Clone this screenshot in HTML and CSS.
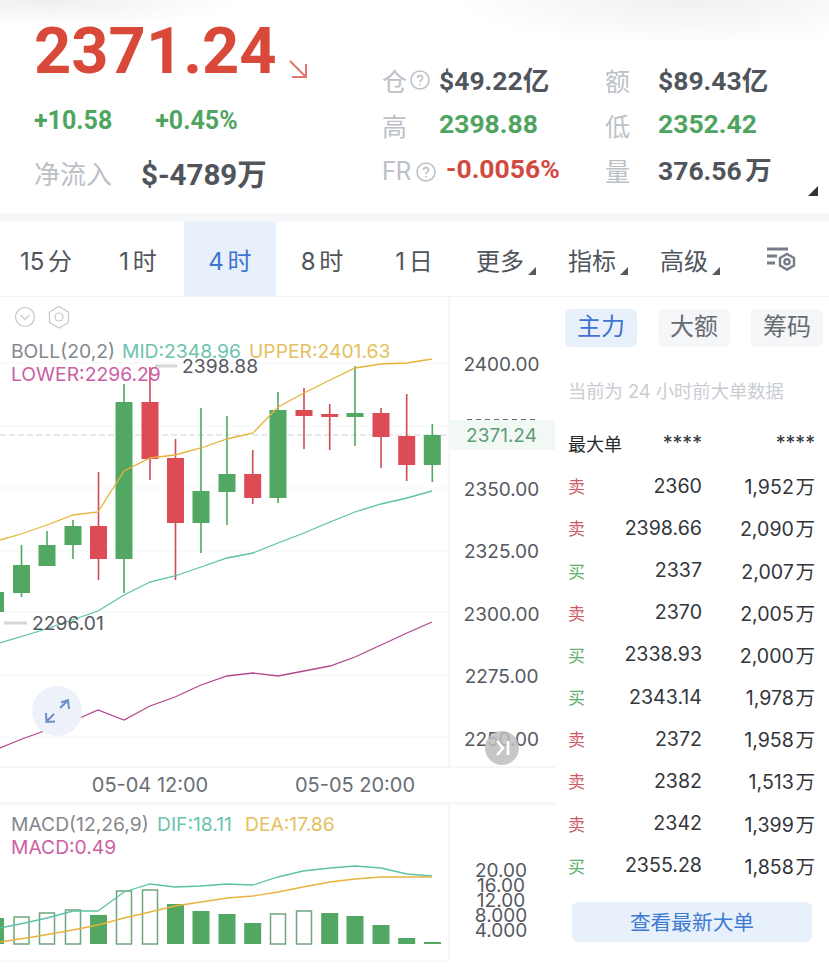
FILE: index.html
```html
<!DOCTYPE html>
<html lang="zh-CN">
  <head>
    <meta charset="UTF-8" />
    <meta name="viewport" content="width=device-width, initial-scale=1.0" />
    <title>2371.24 行情</title>
    <link rel="stylesheet" href="styles.css">
  </head>
  <body>
    <header class="ticker">
      <div class="ticker-main">
        <div class="price-row">
          <span class="price">2371.24</span>
          <svg class="price-arrow" width="22" height="22" viewBox="0 0 22 22">
            <path d="M3 3 L19 19 M5 19 H19 V6" />
          </svg>
        </div>
        <div class="change-row">
          <span>+10.58</span>
          <span>+0.45%</span>
        </div>
        <div class="flow-row">
          <span class="flow-label">净流入</span>
          <span class="flow-value">$-4789万</span>
        </div>
      </div>
      <div class="stats">
        <div class="stat-label">仓<svg class="help" width="20" height="20" viewBox="0 0 20 20"><circle cx="10" cy="10" r="9" /><path d="M7.4 8 C7.4 4.8 12.6 4.8 12.6 8 C12.6 10 10 10 10 12.2 M10 14 V15.4" /></svg></div>
        <div class="stat-value">$49.22亿</div>
        <div class="stat-label">额</div>
        <div class="stat-value">$89.43亿</div>
        <div class="stat-label">高</div>
        <div class="stat-value green">2398.88</div>
        <div class="stat-label">低</div>
        <div class="stat-value green">2352.42</div>
        <div class="stat-label latin">FR<svg class="help" width="20" height="20" viewBox="0 0 20 20"><circle cx="10" cy="10" r="9" /><path d="M7.4 8 C7.4 4.8 12.6 4.8 12.6 8 C12.6 10 10 10 10 12.2 M10 14 V15.4" /></svg></div>
        <div class="stat-value red">-0.0056%</div>
        <div class="stat-label">量</div>
        <div class="stat-value">376.56 万</div>
      </div>
      <span class="corner corner-dark"></span>
    </header>

    <nav class="tabs">
      <a class="tab">15 分</a>
      <a class="tab">1 时</a>
      <a class="tab active">4 时</a>
      <a class="tab">8 时</a>
      <a class="tab">1 日</a>
      <a class="tab menu">更多<span class="corner"></span></a>
      <a class="tab menu">指标<span class="corner"></span></a>
      <a class="tab menu">高级<span class="corner"></span></a>
      <a class="tab tab-icon">
        <svg width="32" height="26" viewBox="0 0 32 26">
          <path class="bars" d="M1 3 H22 M1 10 H11 M1 17 H9" />
          <path class="nut" d="M21 8 L28 12 V19.5 L21 23.5 L14 19.5 V12 Z" />
          <circle class="nut" cx="21" cy="15.8" r="2.6" />
        </svg>
      </a>
    </nav>

    <main class="content">
      <section class="charts">
        <svg class="chart" width="555" height="670" viewBox="0 297 555 670">
          <!-- grid -->
          <path class="grid" d="M0 363 H449 M0 426 H449 M0 488 H449 M0 551 H449 M0 612 H449 M0 675 H449 M0 737 H449 M0 961 H449" />
          <path class="axis" d="M449 297 V767 M449 804 V961 M0 767 H555" />
          <rect class="axis-band" x="0" y="802" width="555" height="3" />
          <path class="price-line" d="M0 435 H449" />

          <!-- pane icons -->
          <circle class="pane-icon" cx="25" cy="317" r="9.5" />
          <path class="pane-icon" d="M20.5 315 L25 319.5 L29.5 315" />
          <path class="pane-icon" d="M59 306.5 L68.5 312 V322.5 L59 328 L49.5 322.5 V312 Z" />
          <circle class="pane-icon" cx="59" cy="317" r="4" />

          <!-- candles -->
          <g class="candle-up">
            <path d="M21.5 545 V597 M47 531 V566 M73 520 V559 M124 384 V593 M201 408 V553 M227 416 V525 M278 392 V503 M355 366 V446 M432.3 424 V482" />
            <rect x="-13" y="592" width="17" height="20" />
            <rect x="13" y="565" width="17" height="28" />
            <rect x="38.5" y="545" width="17" height="21" />
            <rect x="64.5" y="526" width="17" height="19" />
            <rect x="115.5" y="402" width="17" height="157" />
            <rect x="192.5" y="491" width="17" height="32" />
            <rect x="218.5" y="474" width="17" height="18" />
            <rect x="269.5" y="410" width="17" height="88" />
            <rect x="346.5" y="413" width="17" height="4" />
            <rect x="423.8" y="435" width="17" height="30" />
          </g>
          <g class="candle-down">
            <path d="M98.5 472 V580 M150 367 V480 M175.5 439 V580 M252.7 450 V504 M304 388 V449 M329.7 404 V450 M381 408 V468 M406.7 394 V481" />
            <rect x="90" y="526" width="17" height="33" />
            <rect x="141.5" y="402" width="17" height="57" />
            <rect x="167" y="458" width="17" height="65" />
            <rect x="244.2" y="474" width="17" height="24" />
            <rect x="295.5" y="410" width="17" height="6" />
            <rect x="321.2" y="414" width="17" height="3" />
            <rect x="372.5" y="413" width="17" height="24" />
            <rect x="398.2" y="436" width="17" height="29" />
          </g>

          <!-- boll lines -->
          <polyline class="line-upper" points="0,540 21,534 47,525 73,515 98,512 124,471 150,458 175,455 201,448 227,439 253,433 278,407 304,393 330,380 355,368 381,364 407,363 432,359" />
          <polyline class="line-mid" points="0,643 43,630 98,611 124,595 150,582 175,576 201,567 227,558 253,553 278,543 304,533 330,522 355,512 381,504 407,498 432,491" />
          <polyline class="line-lower" points="0,748 22,739 47,730 73,721 98,710 124,720 150,706 175,697 201,685 227,676 253,673 278,676 304,671 330,666 355,657 381,645 407,633 432,622" />

          <!-- high and low marks -->
          <path class="mark" d="M155 366 H177 M4 623 H27" />
          <text class="t-mark" x="182" y="373">2398.88</text>
          <text class="t-mark" x="32" y="630">2296.01</text>

          <!-- legend -->
          <text class="t-legend" y="358"><tspan class="c-gray" x="11">BOLL(20,2)</tspan> <tspan class="c-teal" x="122">MID:2348.96</tspan> <tspan class="c-gold" x="249">UPPER:2401.63</tspan></text>
          <text class="t-legend c-pink" x="11" y="381">LOWER:2296.29</text>

          <!-- price axis -->
          <rect class="last-band" x="450" y="420" width="106" height="30" />
          <path class="last-dash" d="M467 419.5 H538" />
          <text class="t-axis" x="501.5" y="371">2400.00</text>
          <text class="t-axis c-last" x="501.5" y="442">2371.24</text>
          <text class="t-axis" x="501.5" y="496">2350.00</text>
          <text class="t-axis" x="501.5" y="558">2325.00</text>
          <text class="t-axis" x="501.5" y="621">2300.00</text>
          <text class="t-axis" x="501.5" y="683">2275.00</text>
          <text class="t-axis" x="501.5" y="746">2250.00</text>

          <!-- expand button -->
          <circle class="expand-bg" cx="57" cy="711" r="25" />
          <path class="expand" d="M61 702.5 L68 700 L69 709 M68 700.5 L60 708 M46 713 L46.5 722 L55 721.5 M46.5 721.5 L54 714" />

          <!-- jump to latest -->
          <circle class="jump-bg" cx="502" cy="748" r="17" />
          <path class="jump" d="M497 741 L503 748 L497 755 M508 741 V755" />

          <!-- time axis -->
          <text class="t-time" x="150" y="792">05-04 12:00</text>
          <text class="t-time" x="355" y="792">05-05 20:00</text>

          <!-- macd bars -->
          <g class="bar-solid">
            <rect x="-13" y="918" width="17" height="26" />
            <rect x="90" y="915" width="17" height="29" />
            <rect x="167" y="904" width="17" height="40" />
            <rect x="192.5" y="911" width="17" height="33" />
            <rect x="218.5" y="914" width="17" height="30" />
            <rect x="244.2" y="923" width="17" height="21" />
            <rect x="321.2" y="913" width="17" height="31" />
            <rect x="346.5" y="916" width="17" height="28" />
            <rect x="372.5" y="925" width="17" height="19" />
            <rect x="398.2" y="938" width="17" height="6" />
            <rect x="424" y="942" width="17" height="2" />
          </g>
          <g class="bar-hollow">
            <rect x="14" y="917" width="15" height="27" />
            <rect x="39.5" y="913" width="15" height="31" />
            <rect x="65.5" y="910" width="15" height="34" />
            <rect x="116.5" y="891" width="15" height="53" />
            <rect x="142.5" y="890" width="15" height="54" />
            <rect x="270.5" y="914" width="15" height="30" />
            <rect x="296.5" y="911" width="15" height="33" />
          </g>

          <!-- macd lines -->
          <polyline class="line-mid" points="0,928 20,924 47,918 73,911 98,911 124,892 150,884 175,887 201,886 227,884 253,885 278,877 303,871 330,868 355,866 381,868 407,874 432,876" />
          <polyline class="line-upper" points="0,942 33,937 73,930 98,925 124,918 150,912 175,906 201,902 227,898 253,896 278,892 303,887 330,882 355,879 381,877 407,877 432,877" />

          <text class="t-legend" y="831"><tspan class="c-gray" x="11">MACD(12,26,9)</tspan> <tspan class="c-teal" x="157">DIF:18.11</tspan> <tspan class="c-gold" x="245">DEA:17.86</tspan></text>
          <text class="t-legend c-pink" x="11" y="854">MACD:0.49</text>

          <text class="t-axis" x="501" y="877">20.00</text>
          <text class="t-axis" x="501" y="892">16.00</text>
          <text class="t-axis" x="501" y="907">12.00</text>
          <text class="t-axis" x="501" y="922">8.000</text>
          <text class="t-axis" x="501" y="937">4.000</text>
        </svg>
      </section>

      <aside class="orders">
        <div class="order-tabs">
          <a class="order-tab active">主力</a>
          <a class="order-tab">大额</a>
          <a class="order-tab">筹码</a>
        </div>
        <p class="order-note">当前为 24 小时前大单数据</p>
        <div class="order-table">
          <div class="order-row head"><span>最大单</span><span>****</span><span>****</span></div>
          <div class="order-row"><span class="sell">卖</span><span>2360</span><span>1,952 万</span></div>
          <div class="order-row"><span class="sell">卖</span><span>2398.66</span><span>2,090 万</span></div>
          <div class="order-row"><span class="buy">买</span><span>2337</span><span>2,007 万</span></div>
          <div class="order-row"><span class="sell">卖</span><span>2370</span><span>2,005 万</span></div>
          <div class="order-row"><span class="buy">买</span><span>2338.93</span><span>2,000 万</span></div>
          <div class="order-row"><span class="buy">买</span><span>2343.14</span><span>1,978 万</span></div>
          <div class="order-row"><span class="sell">卖</span><span>2372</span><span>1,958 万</span></div>
          <div class="order-row"><span class="sell">卖</span><span>2382</span><span>1,513 万</span></div>
          <div class="order-row"><span class="sell">卖</span><span>2342</span><span>1,399 万</span></div>
          <div class="order-row"><span class="buy">买</span><span>2355.28</span><span>1,858 万</span></div>
        </div>
        <button class="latest-btn">查看最新大单</button>
      </aside>
    </main>
  </body>
</html>
```

FILE: styles.css
```css
/* General Styling */
body {
  font-family: Inter, "Noto Sans CJK SC", sans-serif;
  margin: 0;
  padding: 0;
  width: 829px;
  height: 967px;
  overflow: hidden;
  background-color: white;
  color: #43474e;
}

/* Ticker header */
.ticker {
  position: relative;
  display: flex;
  height: 222px;
  box-sizing: border-box;
  border-bottom: 9px solid #f6f7f9;
  background:
    radial-gradient(ellipse 190px 28px at 50px 0, #efefef, rgba(255, 255, 255, 0)),
    radial-gradient(ellipse 240px 45px at 690px 0, #f0f0f0, rgba(255, 255, 255, 0));
}

.ticker-main {
  width: 382px;
  box-sizing: border-box;
  padding: 13px 0 0 34px;
  font-family: Roboto, "Noto Sans CJK SC", sans-serif;
}

.price-row {
  display: flex;
  align-items: flex-end;
  gap: 10px;
  height: 76px;
}

.price {
  font-size: 65px;
  line-height: 76px;
  font-weight: 700;
  color: #d9493a;
}

.price-arrow {
  margin-bottom: 9px;
}

.price-arrow path {
  fill: none;
  stroke: #e0776e;
  stroke-width: 2;
}

.change-row {
  display: flex;
  gap: 43px;
  margin-top: 17px;
  font-size: 25px;
  line-height: 30px;
  font-weight: 700;
  color: #4fa461;
}

.flow-row {
  display: flex;
  align-items: center;
  gap: 29px;
  margin-top: 24px;
  line-height: 30px;
}

.flow-label {
  font-size: 26px;
  color: #bcc1c7;
}

.flow-value {
  font-size: 29.5px;
  font-weight: 700;
  color: #50555c;
}

.stats {
  display: grid;
  grid-template-columns: 57px 166px 53px 120px;
  grid-auto-rows: 45px;
  align-items: center;
  padding-top: 57px;
  font-family: Roboto, "Noto Sans CJK SC", sans-serif;
}

.stat-label {
  display: flex;
  align-items: center;
  gap: 3px;
  font-size: 25px;
  color: #bcc1c7;
  white-space: nowrap;
}

.stat-label.latin {
  gap: 5px;
  padding-top: 4px;
}

.stat-value {
  padding-bottom: 3px;
  font-size: 26.5px;
  font-weight: 700;
  color: #50555c;
  white-space: nowrap;
  word-spacing: -3px;
}

.stat-value.green {
  color: #4fa461;
}

.stat-value.red {
  margin-left: 7px;
  color: #d2493f;
}

.help {
  flex: none;
}

.help circle,
.help path {
  fill: none;
  stroke: #bcc1c7;
  stroke-width: 1.6;
}

/* Little corner triangles */
.corner {
  position: absolute;
  width: 0;
  height: 0;
  border-style: solid;
  border-width: 0 0 8px 8px;
  border-color: transparent transparent #55595f transparent;
}

.corner-dark {
  right: 11px;
  bottom: 17px;
  border-width: 0 0 10px 10px;
  border-color: transparent transparent #2f3237 transparent;
}

/* Interval tabs */
.tabs {
  display: grid;
  grid-template-columns: repeat(9, 92px);
  height: 75px;
  border-bottom: 1px solid #f2f3f5;
  box-sizing: border-box;
}

.tab {
  display: flex;
  align-items: center;
  justify-content: center;
  font-size: 24px;
  color: #50555c;
  word-spacing: -3px;
  height: 74px;
  box-sizing: border-box;
}

.tab.active {
  background-color: #e8f0fb;
  color: #3f74d1;
}

.tab.menu {
  position: relative;
  justify-content: flex-start;
  padding-left: 16px;
}

.tab.menu .corner {
  left: 68px;
  bottom: 21px;
}

.tab-icon svg {
  margin-right: 1px;
}

.tab-icon .bars {
  fill: none;
  stroke: #767c88;
  stroke-width: 3;
}

.tab-icon .nut {
  fill: none;
  stroke: #767c88;
  stroke-width: 2.4;
}

/* Main area */
.content {
  display: flex;
}

.charts {
  width: 555px;
  flex: none;
}

.chart {
  display: block;
}

.grid {
  stroke: #f4f5f7;
  stroke-width: 1;
}

.axis {
  stroke: #f2f3f5;
  stroke-width: 1.5;
}

.axis-band {
  fill: #f6f7f9;
}

.price-line {
  stroke: #cfd1d4;
  stroke-width: 1;
  stroke-dasharray: 6 3;
}

.pane-icon {
  fill: none;
  stroke: #c4c7cb;
  stroke-width: 1.2;
}

.candle-up path {
  stroke: #4fa85f;
  stroke-width: 1.6;
}

.candle-up rect,
.bar-solid rect {
  fill: #52a862;
}

.candle-down path {
  stroke: #cf4a55;
  stroke-width: 1.6;
}

.candle-down rect {
  fill: #dd4b55;
}

.bar-hollow rect {
  fill: white;
  stroke: #6fa57d;
  stroke-width: 1.5;
}

.line-upper,
.line-mid,
.line-lower {
  fill: none;
  stroke-width: 1.3;
}

.line-upper {
  stroke: #e8b33c;
}

.line-mid {
  stroke: #5cc2a8;
}

.line-lower {
  stroke: #b5478f;
}

.mark {
  stroke: #d5d6d8;
  stroke-width: 3;
}

.last-band {
  fill: #f2f8f3;
}

.last-dash {
  stroke: #6b6f75;
  stroke-width: 1;
  stroke-dasharray: 5 4;
}

text {
  font-family: Inter, sans-serif;
}

.t-legend {
  font-size: 19.3px;
}

.t-mark {
  font-size: 19.3px;
  fill: #55595f;
}

.t-axis {
  font-size: 19px;
  fill: #55595f;
  text-anchor: middle;
}

.t-time {
  font-size: 20px;
  fill: #6a6e74;
  text-anchor: middle;
}

.c-gray {
  fill: #85888c;
}

.c-teal {
  fill: #6cc4ae;
}

.c-gold {
  fill: #e6bf5e;
}

.c-pink {
  fill: #cb5fa4;
}

.t-axis.c-last {
  fill: #5f9c78;
}

.expand-bg {
  fill: #edf2fa;
}

.expand {
  fill: none;
  stroke: #6b8fc4;
  stroke-width: 2;
}

.jump-bg {
  fill: #bdbdbd;
  fill-opacity: 0.85;
}

.jump {
  fill: none;
  stroke: white;
  stroke-width: 2.5;
}

/* Orders panel */
.orders {
  width: 274px;
  box-sizing: border-box;
  padding: 12px 5px 0 10px;
}

.order-tabs {
  display: flex;
  gap: 21px;
}

.order-tab {
  width: 72px;
  height: 38px;
  line-height: 36px;
  text-align: center;
  font-size: 24px;
  color: #666b72;
  background-color: #f5f6f8;
  border-radius: 6px;
}

.order-tab.active {
  background-color: #e8f0fb;
  color: #3f74d1;
}

.order-note {
  margin: 31px 0 0 3px;
  font-size: 18.3px;
  line-height: 26px;
  color: #c9cdd2;
}

.order-table {
  margin-top: 18.4px;
}

.order-row {
  display: grid;
  grid-template-columns: 50px 84px 113px;
  align-items: center;
  height: 42.2px;
  margin-left: 3px;
  font-size: 19.6px;
  word-spacing: -4px;
  color: #33363b;
  white-space: nowrap;
}

.order-row span + span {
  text-align: right;
}

.order-row.head span:first-child {
  font-size: 18px;
  color: #26282c;
}

.sell {
  font-size: 17px;
  color: #cf5a68;
}

.buy {
  font-size: 17px;
  color: #5fae6b;
}

.latest-btn {
  display: block;
  width: 240px;
  height: 40px;
  margin: 16px 0 0 7px;
  padding: 0 0 3px;
  border: none;
  border-radius: 6px;
  font-family: inherit;
  font-size: 20.7px;
  color: #3f7bd0;
  background-color: #e8f0fb;
}
```
